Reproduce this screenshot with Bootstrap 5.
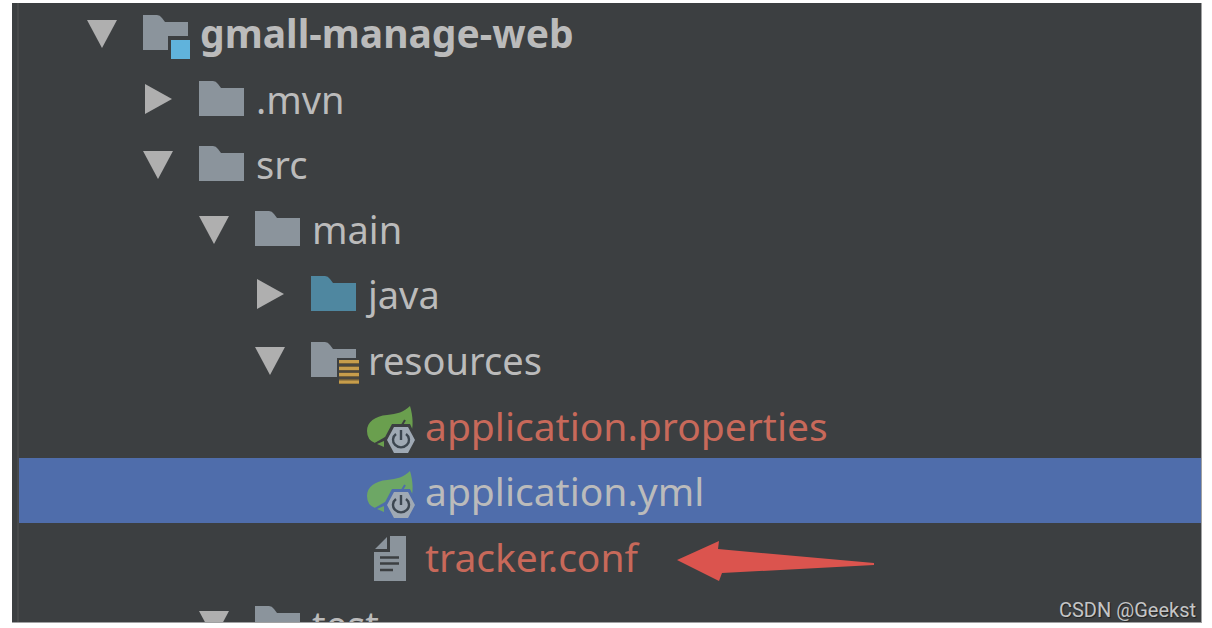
<!DOCTYPE html>
<html lang="en">
<head>
<meta charset="utf-8">
<meta name="viewport" content="width=device-width, initial-scale=1">
<title>gmall-manage-web</title>
<link href="https://cdn.jsdelivr.net/npm/bootstrap@5.3.0/dist/css/bootstrap.min.css" rel="stylesheet">
<style>
  body { background: #fff; padding: 3px 10px 5px 12px; font-family: "Noto Sans", "Open Sans", sans-serif; }
  .panel { background: #3c3f41; border-right: 1px solid #a0a1a2; border-bottom: 1px solid #a0a1a2; padding-left: 5px; }
  .tree { border-left: 2px solid #47494a; color: #bbb; font-size: 38px; line-height: 52px; }
  .node { height: 65px; padding-left: calc(68px + var(--level) * 56px); }
  .node-root { height: 63px; font-size: 39px; }
  .node-tall { height: 67px; }
  .level-0 { --level: 0; } .level-1 { --level: 1; } .level-2 { --level: 2; }
  .level-3 { --level: 3; } .level-4 { --level: 4; }
  .level-4 { font-size: 39px; }
  .toggle { width: 56px; height: 30px; color: #afafaf; }
  .glyph { width: 48px; height: 56px; margin-right: 9px; }
  .level-4 .glyph { margin-right: 10px; }
  .unversioned { color: #c8695a; }
  .selected { background: #4f6dab; }
  .pointer { width: 198px; height: 56px; margin-left: 39px; }
  .credit { right: 5px; bottom: 0; font: 20px/24px Roboto, sans-serif; color: #c4c5c6; text-shadow: 1px 1px 1px #222; }
</style>
</head>
<body class="vh-100">
<svg class="d-none" xmlns="http://www.w3.org/2000/svg">
  <symbol id="down" viewBox="0 0 30 30"><path fill="currentColor" d="M0 2h30L15 30z"/></symbol>
  <symbol id="right" viewBox="0 0 30 30"><path fill="currentColor" d="M2 0l27 15L2 30z"/></symbol>
  <symbol id="folder" viewBox="0 0 48 56"><path fill="currentColor" d="M0 10h14q3 0 5 3l3 4h23v28H0z"/></symbol>
  <symbol id="leaf" viewBox="0 0 48 56">
    <path fill="currentColor" d="M43 8C46 18 47 30 43 38L20 42Q13 42 8 45Q0 42 0 33C0 24 8 18 20 17C30 16 37 14 43 8z"/>
    <path fill="var(--under)" d="M6 46l12-7 4 4v5z"/>
    <path fill="currentColor" d="M10 46l7-3v6z"/>
    <path fill="var(--under)" d="M25 26h18l7 15-7 15H25l-8-15z"/>
    <path d="M35 27l3-5" stroke="var(--under)" stroke-width="2"/>
    <path fill="#9fa9b4" d="M27 29h14l7 13-7 13H27l-7-13z"/>
    <path fill="none" stroke="#3c4650" stroke-width="2.4" d="M34 32v10M29 36a8 7.500 0 1 0 10 0"/>
  </symbol>
</svg>
<main class="panel position-relative h-100 overflow-hidden">
  <ul class="tree list-unstyled m-0" role="tree" aria-label="Project files">
    <li class="node node-root level-0 d-flex align-items-center pb-1 fw-bold" role="treeitem" aria-expanded="true">
      <button class="toggle btn p-0 border-0 d-flex flex-shrink-0" type="button" aria-label="Collapse"><svg width="30" height="30"><use href="#down"/></svg></button>
      <svg class="glyph flex-shrink-0" viewBox="0 0 48 56" color="#8b949c"><use href="#folder"/><path fill="#3c3f41" d="M25 31h23v25H25z"/><path fill="#60b3dc" d="M28 35h19v19H28z"/></svg>
      <span>gmall-manage-web</span>
    </li>
    <li class="node level-1 d-flex align-items-center" role="treeitem" aria-expanded="false">
      <button class="toggle btn p-0 border-0 d-flex flex-shrink-0" type="button" aria-label="Expand"><svg width="30" height="30"><use href="#right"/></svg></button>
      <svg class="glyph flex-shrink-0" color="#8b949c"><use href="#folder"/></svg>
      <span>.mvn</span>
    </li>
    <li class="node level-1 d-flex align-items-center" role="treeitem" aria-expanded="true">
      <button class="toggle btn p-0 border-0 d-flex flex-shrink-0" type="button" aria-label="Collapse"><svg width="30" height="30"><use href="#down"/></svg></button>
      <svg class="glyph flex-shrink-0" color="#8b949c"><use href="#folder"/></svg>
      <span>src</span>
    </li>
    <li class="node level-2 d-flex align-items-center" role="treeitem" aria-expanded="true">
      <button class="toggle btn p-0 border-0 d-flex flex-shrink-0" type="button" aria-label="Collapse"><svg width="30" height="30"><use href="#down"/></svg></button>
      <svg class="glyph flex-shrink-0" color="#8b949c"><use href="#folder"/></svg>
      <span>main</span>
    </li>
    <li class="node level-3 d-flex align-items-center" role="treeitem" aria-expanded="false">
      <button class="toggle btn p-0 border-0 d-flex flex-shrink-0" type="button" aria-label="Expand"><svg width="30" height="30"><use href="#right"/></svg></button>
      <svg class="glyph flex-shrink-0" color="#4f87a0"><use href="#folder"/></svg>
      <span>java</span>
    </li>
    <li class="node node-tall level-3 d-flex align-items-center" role="treeitem" aria-expanded="true">
      <button class="toggle btn p-0 border-0 d-flex flex-shrink-0" type="button" aria-label="Collapse"><svg width="30" height="30"><use href="#down"/></svg></button>
      <svg class="glyph flex-shrink-0" viewBox="0 0 48 56" color="#8b949c"><use href="#folder"/><path fill="#3c3f41" d="M26 26h22v28H26z"/><path fill="#735f38" d="M28 28h20v24H28z"/><path stroke="#c79d4b" stroke-width="3" d="M28 29.500h20M28 36.500h20M28 42.500h20M28 50h20"/><path stroke="#4a4740" stroke-width="2" d="M28 33h20M28 39.500h20M28 46h20"/></svg>
      <span>resources</span>
    </li>
    <li class="node level-4 d-flex align-items-center unversioned" role="treeitem">
      <span class="toggle flex-shrink-0"></span>
      <svg class="glyph flex-shrink-0" color="#6a9f4e" style="--under:#3c3f41"><use href="#leaf"/></svg>
      <span>application.properties</span>
    </li>
    <li class="node level-4 d-flex align-items-center selected" role="treeitem" aria-selected="true">
      <span class="toggle flex-shrink-0"></span>
      <svg class="glyph flex-shrink-0" color="#6da765" style="--under:#4f6dab"><use href="#leaf"/></svg>
      <span>application.yml</span>
    </li>
    <li class="node node-tall level-4 d-flex align-items-center unversioned" role="treeitem">
      <span class="toggle flex-shrink-0"></span>
      <svg class="glyph flex-shrink-0" viewBox="0 0 48 56"><path fill="#8b949c" d="M23 7h16v45H7V23h16zM20 8v12H8z"/><path stroke="#3c3f41" stroke-width="2.500" d="M13 28.500h19M13 34.500h19M13 41h13"/></svg>
      <span>tracker.conf</span>
      <svg class="pointer flex-shrink-0" viewBox="0 0 198 56" aria-hidden="true"><path fill="#db544e" d="M0 31L42 12l-1 8 156 14v2L45 44l-3 8z"/></svg>
    </li>
    <li class="node node-tall level-2 d-flex align-items-center" role="treeitem" aria-expanded="true">
      <button class="toggle btn p-0 border-0 d-flex flex-shrink-0" type="button" aria-label="Collapse"><svg width="30" height="30"><use href="#down"/></svg></button>
      <svg class="glyph flex-shrink-0" color="#8b949c"><use href="#folder"/></svg>
      <span>test</span>
    </li>
  </ul>
  <div class="credit position-absolute">CSDN @Geekst</div>
</main>
<script src="https://cdn.jsdelivr.net/npm/bootstrap@5.3.0/dist/js/bootstrap.bundle.min.js"></script>
</body>
</html>
